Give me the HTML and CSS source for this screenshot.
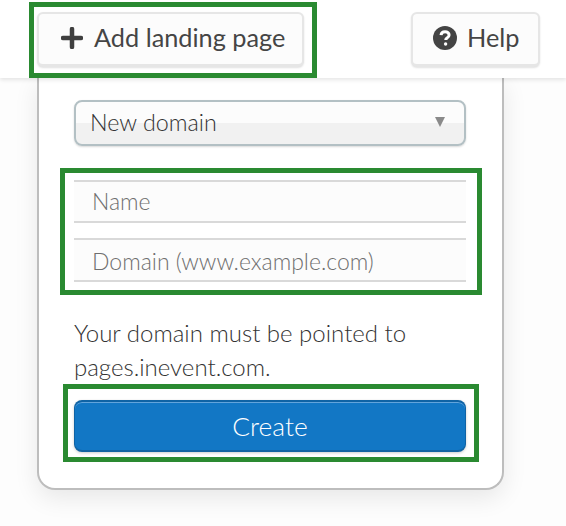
FILE: index.html
```html
<!DOCTYPE html>
<html lang="en">
<head>
<meta charset="utf-8">
<title>Add landing page</title>
<link rel="stylesheet" href="styles.css">
</head>
<body>
<header class="topbar">
  <button class="tool-btn add-btn" type="button">
    <svg class="icon plus" viewBox="0 0 22 22" aria-hidden="true"><path d="M11 2v18M2 11h18"/></svg>
    <span class="label-add">Add landing page</span>
  </button>
  <button class="tool-btn help-btn" type="button">
    <svg class="icon help" viewBox="0 0 24 24" aria-hidden="true"><circle cx="12" cy="12" r="12"/><path class="q" d="M8 9.200c.2-2.300 1.900-3.500 4.100-3.500 2.300 0 4 1.400 4 3.300 0 1.600-.9 2.300-2.100 3.100-.9.600-1.300 1-1.300 2"/><circle class="dot" cx="12.600" cy="18" r="1.700"/></svg>
    <span>Help</span>
  </button>
</header>
<main class="stage">
  <section class="card">
    <div class="select">
      <span>New domain</span>
      <span class="caret"></span>
    </div>
    <div class="fields">
      <div class="field">Name</div>
      <div class="field">Domain (www.example.com)</div>
    </div>
    <p class="note">Your domain must be pointed to pages.inevent.com.</p>
    <button class="create" type="button">Create</button>
  </section>
</main>
<div class="mark mark-add"></div>
<div class="mark mark-fields"></div>
<div class="mark mark-create"></div>
</body>
</html>
```
FILE: styles.css
```css
* { box-sizing: border-box; }
html, body { margin: 0; height: 100%; }
body {
  position: relative;
  width: 566px;
  height: 526px;
  overflow: hidden;
  background: #fdfdfd;
  font-family: Lato, "Liberation Sans", sans-serif;
  color: #4a4a4a;
}
.topbar {
  position: relative;
  z-index: 2;
  height: 78px;
  padding: 12px 26px 0 37px;
  display: flex;
  justify-content: space-between;
  align-items: flex-start;
  background: #fff;
  box-shadow: 0 2px 4px rgba(0,0,0,.1);
}
.tool-btn {
  height: 55px;
  display: flex;
  align-items: center;
  background: #fcfcfc;
  border: 2px solid #e6e6e6;
  border-bottom-width: 3px;
  border-radius: 6px;
  box-shadow: 0 1px 2px rgba(0,0,0,.12);
  font: 400 25.300px Lato, "Liberation Sans", sans-serif;
  color: #454545;
  padding: 0 0 4px;
}
.add-btn { width: 267px; gap: 11px; padding-left: 22px; }
.help-btn { width: 129px; gap: 10px; padding-left: 20px; }
.icon { display: block; flex: none; margin-top: 1px; }
.plus { width: 22px; height: 22px; }
.plus path { fill: none; stroke: #3f3f3f; stroke-width: 4.500; stroke-linecap: round; }
.help { width: 24px; height: 24px; }
.help circle { fill: #444; }
.help .q { fill: none; stroke: #fff; stroke-width: 3; }
.help .dot { fill: #fff; }
.stage {
  height: 448px;
  padding-left: 37px;
}
.card {
  width: 467px;
  height: 412px;
  padding: 22px 36px 0 35px;
  background: #fff;
  border: 2px solid #bdbdbd;
  border-top: 0;
  border-radius: 0 0 18px 18px;
  box-shadow: 0 8px 24px rgba(0,0,0,.09);
}
.select {
  height: 46px;
  display: flex;
  align-items: center;
  justify-content: space-between;
  padding: 0 19px 2px 14px;
  border: 2px solid #b3c0c4;
  border-radius: 8px;
  background: linear-gradient(#fcfcfc 0 50%, #f1f1f1 50% 100%);
  box-shadow: 0 1px 2px rgba(0,0,0,.15);
  font-size: 23.300px;
  font-weight: 300;
  color: #333;
}
.caret {
  width: 0;
  height: 0;
  border-left: 5px solid transparent;
  border-right: 5px solid transparent;
  border-top: 10px solid #8a8a8a;
}
.fields {
  margin-top: 34px;
  display: flex;
  flex-direction: column;
  gap: 15px;
}
.field {
  height: 43px;
  padding: 0 0 1px 18px;
  display: flex;
  align-items: center;
  background: #fcfcfc;
  border-top: 2px solid #d9d9d9;
  border-bottom: 2px solid #d9d9d9;
  font-size: 23px;
  font-weight: 300;
  color: #6f6f6f;
}
.field + .field {
  height: 44px;
  padding: 1px 0 0 18px;
}
.note {
  margin: 34px 0 0;
  font-size: 24px;
  font-weight: 300;
  line-height: 34px;
  color: #333;
}
.create {
  display: block;
  width: 100%;
  height: 52px;
  margin-top: 16px;
  padding: 0 0 1px;
  border: 1px solid #0f63a5;
  border-top: 2px solid #0f63a5;
  border-bottom: 2px solid #1264a3;
  border-radius: 8px;
  background: #1277c5;
  box-shadow: inset 0 1px 0 #62a4dc, 0 1px 3px rgba(0,0,0,.2);
  font: 300 26.400px Lato, "Liberation Sans", sans-serif;
  color: #fff;
}
.mark {
  position: absolute;
  z-index: 3;
  border: 5px solid #2a8a31;
  pointer-events: none;
}
.mark-add { left: 29px; top: 2px; width: 288px; height: 76px; }
.mark-fields { left: 60px; top: 168px; width: 422px; height: 127px; }
.mark-create { left: 63px; top: 384px; width: 416px; height: 78px; }
```
